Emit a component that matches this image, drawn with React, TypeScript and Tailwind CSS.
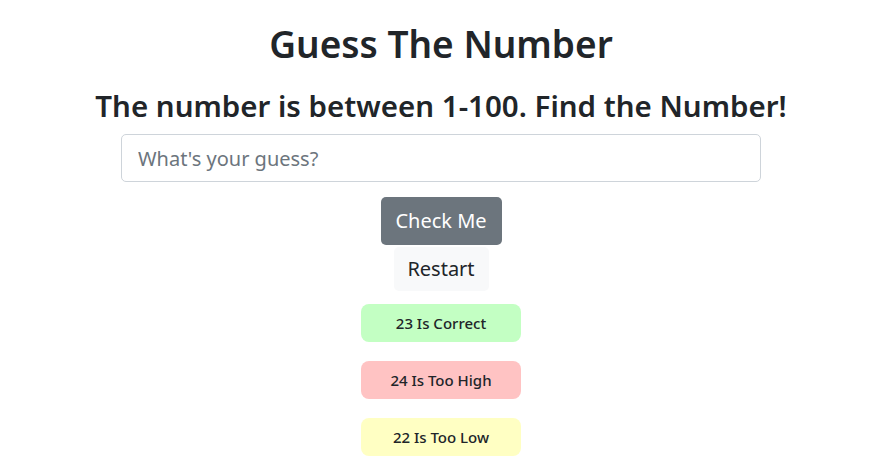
export default function App() {
  const results = [
    { text: "23 Is Correct", bg: "bg-[#c3ffc3]" },
    { text: "24 Is Too High", bg: "bg-[#ffc3c3]" },
    { text: "22 Is Too Low", bg: "bg-[#ffffc3]" },
  ]

  return (
    <div className="flex min-h-[465px] flex-col items-center bg-white font-['Noto_Sans',sans-serif] text-[#212529]">
      <h1 className="mt-[22px] text-[37px] font-semibold leading-[44px]">Guess The Number</h1>
      <h2 className="mt-[22px] text-[29.5px] font-semibold leading-[35px]">
        The number is between 1-100. Find the Number!
      </h2>
      <input
        type="text"
        placeholder="What's your guess?"
        className="mt-[11px] h-[48px] w-[640px] rounded-[5px] border border-[#ced4da] px-4 text-[20px] placeholder:text-[#6c757d] focus:outline-none"
      />
      <button className="mt-[15px] h-[48px] w-[121px] rounded-[5px] bg-[#6c757d] text-[20px] text-white">
        Check Me
      </button>
      <button className="mt-[2px] h-[44px] w-[95px] rounded-[5px] bg-[#f8f9fa] text-[20px] text-[#212529]">
        Restart
      </button>
      <div className="mt-[13px] flex flex-col gap-[19px]">
        {results.map((r) => (
          <div
            key={r.text}
            className={`flex h-[38px] w-[160px] items-center justify-center rounded-[8px] text-[15px] font-medium ${r.bg}`}
          >
            {r.text}
          </div>
        ))}
      </div>
    </div>
  )
}
